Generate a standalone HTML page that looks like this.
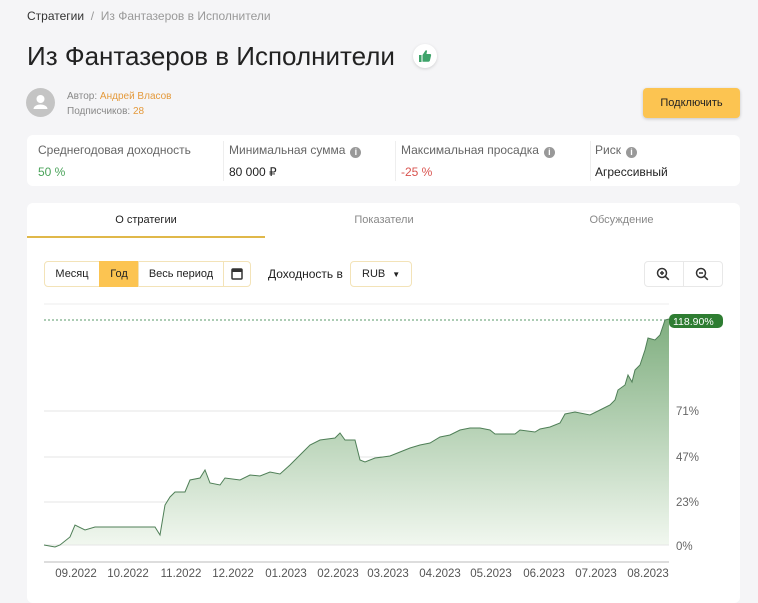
<!DOCTYPE html><html><head><meta charset="utf-8"><style>
*{box-sizing:border-box;margin:0;padding:0}
body{width:758px;height:589px;overflow:hidden;background:#f5f5f7;font-family:"Liberation Sans",sans-serif;color:#222;position:relative}
.a{position:absolute}
.card{background:#fff;border-radius:6px}
.lbl{font-size:12px;color:#666}
.info{display:inline-block;width:11px;height:11px;border-radius:50%;background:#999;color:#fff;font-size:9px;text-align:center;line-height:11px;font-weight:bold;margin-left:5px;vertical-align:-1px}
.btn{border:1px solid #f3e3b8;background:#fff;font-size:11px;height:26px;line-height:24px}
</style></head><body>
<div class="a" style="left:27px;top:9px;font-size:12px"><span style="color:#333">Стратегии</span> <span style="color:#999">&nbsp;/&nbsp; Из Фантазеров в Исполнители</span></div>
<div class="a" style="left:27px;top:41px;font-size:26px;color:#222">Из Фантазеров в Исполнители</div>
<div class="a" style="left:413px;top:44px;width:24px;height:24px;border-radius:50%;background:#fff;box-shadow:0 1px 3px rgba(0,0,0,.15)"><svg width="24" height="24" viewBox="0 0 24 24"><path d="M6 11h2.5v7H6zM9.5 11l3-4.5c.6-.6 1.6-.3 1.5.7L13.5 10H17c.8 0 1.3.7 1.1 1.4l-1.2 5.2c-.2.6-.7 1.1-1.4 1.1H9.5z" fill="#3ea36a"/></svg></div>
<div class="a" style="left:26px;top:88px;width:29px;height:29px;border-radius:50%;background:#c4c4c4"><svg width="29" height="29" viewBox="0 0 29 29"><circle cx="14.5" cy="11" r="4" fill="#fff"/><path d="M7.5 21c0-3 4-4.5 7-4.5s7 1.5 7 4.5z" fill="#fff"/></svg></div>
<div class="a" style="left:67px;top:89px;font-size:10px;color:#888;line-height:15px">Автор: <span style="color:#e49a3c">Андрей Власов</span><br>Подписчиков: <span style="color:#e49a3c">28</span></div>
<div class="a" style="left:643px;top:88px;width:97px;height:30px;background:#fcc451;border-radius:4px;font-size:11px;text-align:center;line-height:30px;box-shadow:0 1px 3px rgba(0,0,0,.2)">Подключить</div>
<div class="a card" style="left:27px;top:135px;width:713px;height:51px">
<div class="a lbl" style="left:11px;top:8px">Среднегодовая доходность</div><div class="a" style="left:11px;top:30px;font-size:12px;color:#4aa35a">50 %</div>
<div class="a" style="left:196px;top:6px;width:1px;height:40px;background:#eee"></div>
<div class="a lbl" style="left:202px;top:8px">Минимальная сумма<span class="info">i</span></div><div class="a" style="left:202px;top:30px;font-size:12px">80 000 ₽</div>
<div class="a" style="left:368px;top:6px;width:1px;height:40px;background:#eee"></div>
<div class="a lbl" style="left:374px;top:8px">Максимальная просадка<span class="info">i</span></div><div class="a" style="left:374px;top:30px;font-size:12px;color:#d9534f">-25 %</div>
<div class="a" style="left:563px;top:6px;width:1px;height:40px;background:#eee"></div>
<div class="a lbl" style="left:568px;top:8px">Риск<span class="info">i</span></div><div class="a" style="left:568px;top:30px;font-size:12px">Агрессивный</div>
</div>
<div class="a card" style="left:27px;top:203px;width:713px;height:400px">
<div class="a" style="left:0;top:11px;width:238px;text-align:center;font-size:11px">О стратегии</div>
<div class="a" style="left:238px;top:11px;width:238px;text-align:center;font-size:11px;color:#888">Показатели</div>
<div class="a" style="left:476px;top:11px;width:237px;text-align:center;font-size:11px;color:#888">Обсуждение</div>
<div class="a" style="left:0;top:33px;width:238px;height:2px;background:#e0b84a"></div>
<div class="a btn" style="left:17px;top:58px;width:56px;text-align:center;border-radius:4px 0 0 4px">Месяц</div>
<div class="a" style="left:72px;top:58px;width:40px;height:26px;background:#fcc451;font-size:11px;text-align:center;line-height:26px">Год</div>
<div class="a btn" style="left:111px;top:58px;width:86px;text-align:center">Весь период</div>
<div class="a btn" style="left:196px;top:58px;width:28px;border-radius:0 4px 4px 0"><svg width="26" height="24" viewBox="0 0 26 24"><rect x="8" y="7" width="10" height="10" rx="1" fill="none" stroke="#333" stroke-width="1.5"/><rect x="8" y="7" width="10" height="3" fill="#333"/></svg></div>
<div class="a" style="left:241px;top:64px;font-size:12px">Доходность в</div>
<div class="a btn" style="left:323px;top:58px;width:62px;border-radius:4px;padding-left:11px">RUB <span style="font-size:8px;margin-left:4px">▼</span></div>
<div class="a btn" style="left:617px;top:58px;width:79px;border-color:#e8e8e8;border-radius:4px"></div>
<div class="a" style="left:656px;top:59px;width:1px;height:24px;background:#e8e8e8"></div>
<svg class="a" style="left:627px;top:62px" width="18" height="18" viewBox="0 0 18 18"><circle cx="8" cy="8" r="4.5" fill="none" stroke="#333" stroke-width="1.5"/><path d="M11.3 11.3l3.5 3.5M6 8h4M8 6v4" stroke="#333" stroke-width="1.5"/></svg>
<svg class="a" style="left:666px;top:62px" width="18" height="18" viewBox="0 0 18 18"><circle cx="8" cy="8" r="4.5" fill="none" stroke="#333" stroke-width="1.5"/><path d="M11.3 11.3l3.5 3.5M6 8h4" stroke="#333" stroke-width="1.5"/></svg>
</div>
<svg class="a" style="left:0;top:0" width="758" height="589">
<defs><linearGradient id="g" x1="0" y1="0" x2="0" y2="1"><stop offset="0" stop-color="#7fae7f"/><stop offset="1" stop-color="#f2f8f0"/></linearGradient></defs>
<line x1="44" y1="304" x2="669" y2="304" stroke="#eee"/>
<line x1="44" y1="411" x2="669" y2="411" stroke="#e6e6e6"/>
<line x1="44" y1="457" x2="669" y2="457" stroke="#e6e6e6"/>
<line x1="44" y1="502" x2="669" y2="502" stroke="#e6e6e6"/>
<line x1="44" y1="320" x2="669" y2="320" stroke="#5a9a6a" stroke-dasharray="2,2"/>
<path d="M44 545L55 547L60 545L70 537L75 525L85 530L95 527L155 527L160 535L165 505L170 497L175 492L185 492L190 480L200 478L205 470L210 483L220 485L225 478L240 480L250 475L260 476L270 472L280 474L290 465L300 455L310 445L320 440L335 438L340 433L345 440L355 440L360 460L365 462L375 458L390 456L400 452L410 448L420 445L430 443L440 437L450 435L460 430L470 428L480 428L490 430L495 434L515 434L520 430L535 432L540 429L550 427L560 423L565 414L575 412L590 415L600 410L610 405L615 400L618 390L625 385L628 375L632 382L635 370L640 365L645 350L648 338L655 340L660 335L665 320L669 319L669 545L44 545Z" fill="url(#g)"/>
<line x1="44" y1="545" x2="669" y2="545" stroke="#e6e6e6"/>
<path d="M44 545L55 547L60 545L70 537L75 525L85 530L95 527L155 527L160 535L165 505L170 497L175 492L185 492L190 480L200 478L205 470L210 483L220 485L225 478L240 480L250 475L260 476L270 472L280 474L290 465L300 455L310 445L320 440L335 438L340 433L345 440L355 440L360 460L365 462L375 458L390 456L400 452L410 448L420 445L430 443L440 437L450 435L460 430L470 428L480 428L490 430L495 434L515 434L520 430L535 432L540 429L550 427L560 423L565 414L575 412L590 415L600 410L610 405L615 400L618 390L625 385L628 375L632 382L635 370L640 365L645 350L648 338L655 340L660 335L665 320L669 319" fill="none" stroke="#4f7f57" stroke-width="1"/>
<line x1="44" y1="562" x2="669" y2="562" stroke="#bbb"/>
<rect x="669" y="314" width="54" height="14" rx="5" fill="#2e7d32"/>
<text x="673" y="325" font-size="10.5" fill="#fff" font-family="Liberation Sans">118.90%</text>
<g font-size="11.5" fill="#666" font-family="Liberation Sans">
<text x="676" y="415">71%</text><text x="676" y="461">47%</text><text x="676" y="506">23%</text><text x="676" y="550">0%</text>
</g>
<g font-size="11.5" fill="#555" font-family="Liberation Sans" text-anchor="middle">
<text x="76" y="577">09.2022</text><text x="128" y="577">10.2022</text><text x="181" y="577">11.2022</text><text x="233" y="577">12.2022</text><text x="286" y="577">01.2023</text><text x="338" y="577">02.2023</text><text x="388" y="577">03.2023</text><text x="440" y="577">04.2023</text><text x="491" y="577">05.2023</text><text x="544" y="577">06.2023</text><text x="596" y="577">07.2023</text><text x="648" y="577">08.2023</text>
</g>
</svg>
</body></html>
